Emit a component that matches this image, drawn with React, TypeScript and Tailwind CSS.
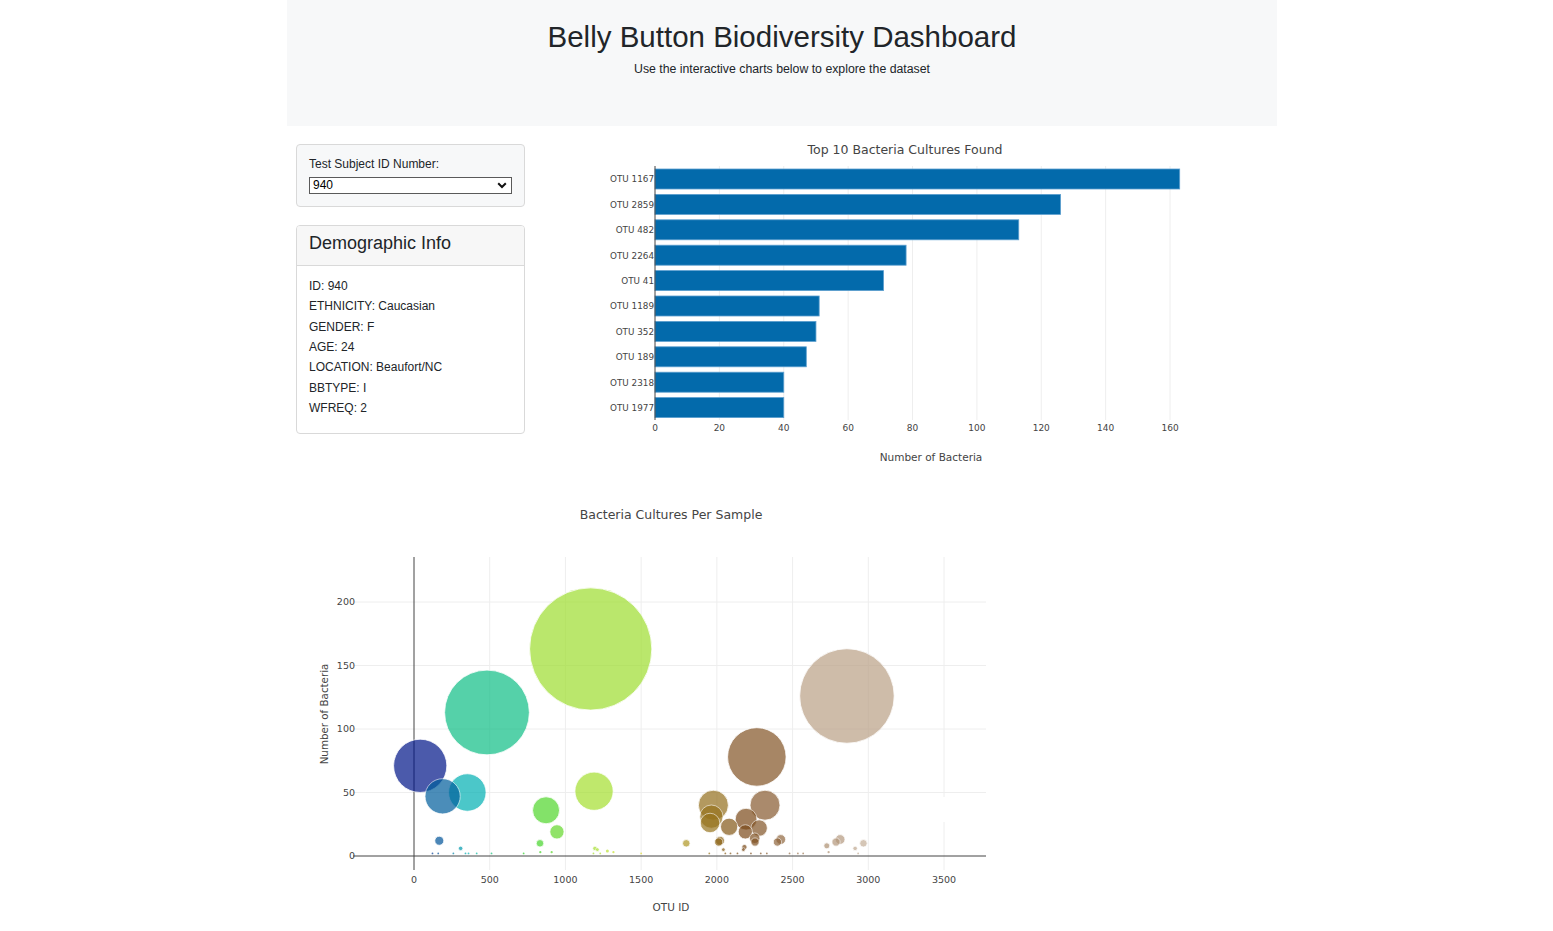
import React from 'react';

const topTen = [
  { otu: 1167, value: 163 },
  { otu: 2859, value: 126 },
  { otu: 482, value: 113 },
  { otu: 2264, value: 78 },
  { otu: 41, value: 71 },
  { otu: 1189, value: 51 },
  { otu: 352, value: 50 },
  { otu: 189, value: 47 },
  { otu: 2318, value: 40 },
  { otu: 1977, value: 40 },
];

// otu id, sample value
const samples: [number, number][] = [
  [41, 71], [1167, 163], [482, 113], [2859, 126], [2264, 78], [1189, 51], [352, 50], [189, 47],
  [2318, 40], [1977, 40], [872, 36], [944, 19], [832, 10], [167, 12], [308, 6], [834, 3], [909, 3],
  [1195, 6], [1211, 5], [1277, 4], [1317, 3], [1798, 10], [1964, 31], [1955, 26], [2081, 23],
  [2193, 29], [2188, 19], [2279, 22], [2021, 12], [2012, 11], [2250, 14], [2252, 11], [2422, 13],
  [2400, 11], [2043, 5], [2175, 5], [2182, 7], [2726, 8], [2787, 11], [2814, 13], [2913, 6],
  [2968, 10], [2738, 3], [2933, 2], [122, 2], [160, 2], [260, 2], [340, 2], [360, 2], [414, 2],
  [512, 2], [724, 2], [1185, 2], [1230, 2], [1500, 2], [1950, 2], [2056, 2], [2090, 2], [2136, 2],
  [2225, 2], [2290, 2], [2330, 2], [2480, 2], [2535, 2], [2570, 2],
];

const earthStops: [number, number[]][] = [
  [0, [0, 0, 130]],
  [0.1, [0, 180, 180]],
  [0.2, [40, 210, 40]],
  [0.4, [230, 230, 50]],
  [0.6, [120, 70, 20]],
  [1, [255, 255, 255]],
];

function earth(t: number) {
  for (let i = 1; i < earthStops.length; i++) {
    const [t1, c1] = earthStops[i];
    const [t0, c0] = earthStops[i - 1];
    if (t <= t1) {
      const f = (t - t0) / (t1 - t0);
      const c = c0.map((v, k) => Math.round(v + (c1[k] - v) * f));
      return `rgb(${c[0]},${c[1]},${c[2]})`;
    }
  }
  return 'rgb(255,255,255)';
}

const demo = [
  'ID: 940',
  'ETHNICITY: Caucasian',
  'GENDER: F',
  'AGE: 24',
  'LOCATION: Beaufort/NC',
  'BBTYPE: I',
  'WFREQ: 2',
];

const plotFont = { fontFamily: '"DejaVu Sans", Verdana, sans-serif' };

function BarChart() {
  const x0 = 655;
  const k = 3.219;
  return (
    <svg width={700} height={350} viewBox="525 126 700 350" style={plotFont}>
      <text x={905} y={154} textAnchor="middle" fontSize={12.5} fill="#444">
        Top 10 Bacteria Cultures Found
      </text>
      {[20, 40, 60, 80, 100, 120, 140, 160].map((v) => (
        <line key={v} x1={x0 + v * k} x2={x0 + v * k} y1={166} y2={420} stroke="#eee" />
      ))}
      {topTen.map((b, i) => {
        const cy = 179 + i * 25.4;
        return (
          <g key={b.otu}>
            <rect x={x0} y={cy - 10} width={b.value * k} height={20} fill="#036aab" stroke="#5d9fcf" strokeWidth={0.8} />
            <text x={654} y={cy + 3.4} textAnchor="end" fontSize={8.8} fill="#444">
              OTU {b.otu}
            </text>
          </g>
        );
      })}
      <line x1={x0} x2={x0} y1={166} y2={420} stroke="#444" />
      {[0, 20, 40, 60, 80, 100, 120, 140, 160].map((v) => (
        <text key={v} x={x0 + v * k} y={431} textAnchor="middle" fontSize={9} fill="#444">
          {v}
        </text>
      ))}
      <text x={931} y={461} textAnchor="middle" fontSize={10.5} fill="#444">
        Number of Bacteria
      </text>
    </svg>
  );
}

function BubbleChart() {
  const ox = 414;
  const oy = 856;
  const kx = 0.15143;
  const ky = 1.27;
  const sorted = [...samples].sort((a, b) => b[1] - a[1]);
  return (
    <svg width={750} height={455} viewBox="287 476 750 455" style={plotFont}>
      <text x={671} y={519} textAnchor="middle" fontSize={12.5} fill="#444">
        Bacteria Cultures Per Sample
      </text>
      {[500, 1000, 1500, 2000, 2500, 3000, 3500].map((v) => (
        <line key={v} x1={ox + v * kx} x2={ox + v * kx} y1={557} y2={870} stroke="#eee" />
      ))}
      {[50, 100, 150, 200].map((v) => (
        <line key={v} x1={353} x2={986} y1={oy - v * ky} y2={oy - v * ky} stroke="#eee" />
      ))}
      <line x1={ox} x2={ox} y1={557} y2={870} stroke="#444" />
      <line x1={353} x2={986} y1={oy} y2={oy} stroke="#444" />
      {sorted.map(([otu, v], i) => (
        <circle
          key={i}
          cx={ox + otu * kx}
          cy={oy - v * ky}
          r={Math.max(v * 0.375, 0.9)}
          fill={earth(otu / 3600)}
          stroke="#fff"
          strokeWidth={v > 4 ? 0.8 : 0}
          opacity={0.7}
        />
      ))}
      <rect x={942} y={797} width={4} height={25} fill="#fff" />
      {[0, 50, 100, 150, 200].map((v) => (
        <text key={v} x={355} y={oy - v * ky + 3.3} textAnchor="end" fontSize={9.5} fill="#444">
          {v}
        </text>
      ))}
      {[0, 500, 1000, 1500, 2000, 2500, 3000, 3500].map((v) => (
        <text key={v} x={ox + v * kx} y={882.5} textAnchor="middle" fontSize={9.5} fill="#444">
          {v}
        </text>
      ))}
      <text x={671} y={911} textAnchor="middle" fontSize={10.5} fill="#444">
        OTU ID
      </text>
      <text
        x={0}
        y={0}
        transform="translate(328 714) rotate(-90)"
        textAnchor="middle"
        fontSize={10.3}
        fill="#444"
      >
        Number of Bacteria
      </text>
    </svg>
  );
}

export default function App() {
  return (
    <div className="min-h-screen bg-white text-[#212529]" style={{ fontFamily: '"Liberation Sans", Arial, sans-serif' }}>
      <div className="ml-[287px] w-[990px]">
        <header className="h-[126px] bg-[#f7f8f9] pt-[19px] text-center">
          <h1 className="text-[29.5px] leading-[36px] font-medium">Belly Button Biodiversity Dashboard</h1>
          <p className="mt-[6px] text-[12.3px] leading-[16px]">Use the interactive charts below to explore the dataset</p>
        </header>

        <div className="flex">
          <div className="w-[238px] shrink-0 pl-[9px]">
            <div className="mt-[18px] rounded-[4px] border border-[#d9d9d9] bg-[#f7f8f9] px-[12px] pt-[12px] pb-[12px]">
              <label className="block text-[12px] leading-[14px]">Test Subject ID Number:</label>
              <div className="relative mt-[6px] h-[17px] w-[203px]">
                <select
                  defaultValue="940"
                  className="block h-[17px] w-full appearance-none rounded-none border border-[#5a5a5a] bg-white py-0 pl-[3px] text-[12px] leading-[15px] text-black outline-none"
                >
                  <option value="940">940</option>
                  <option value="941">941</option>
                  <option value="943">943</option>
                </select>
                <svg className="pointer-events-none absolute right-[5px] top-[5px]" width="10" height="7" viewBox="0 0 10 7">
                  <path d="M1.2 1.2 L5 5 L8.8 1.2" fill="none" stroke="#111" strokeWidth="2" />
                </svg>
              </div>
            </div>

            <div className="mt-[18px] overflow-hidden rounded-[4px] border border-[#d9d9d9] bg-white">
              <div className="border-b border-[#d9d9d9] bg-[#f7f7f7] px-[12px] pt-[6px] pb-[11px]">
                <h3 className="text-[18px] leading-[22px]">Demographic Info</h3>
              </div>
              <div className="px-[12px] pt-[10px] pb-[15px]">
                {demo.map((d) => (
                  <p key={d} className="text-[12px] leading-[20.33px]">
                    {d}
                  </p>
                ))}
              </div>
            </div>
          </div>

          <div className="flex-1">
            <BarChart />
          </div>
        </div>

        <BubbleChart />
      </div>
    </div>
  );
}
